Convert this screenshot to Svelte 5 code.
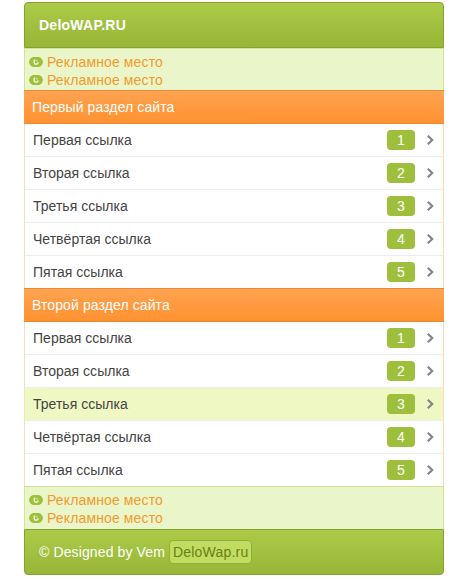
<script>
  const names = ['Первая ссылка', 'Вторая ссылка', 'Третья ссылка', 'Четвёртая ссылка', 'Пятая ссылка'];
  const sections = [
    { title: 'Первый раздел сайта', active: -1 },
    { title: 'Второй раздел сайта', active: 2 }
  ];
</script>

{#snippet ads(position)}
  <div class="ads {position}">
    {#each [1, 2] as n (n)}
      <a class="ad" href="#ad{n}">
        <svg width="14" height="10" viewBox="0 0 14 10">
          <path d="M4 0h6c2.200.6 3.600 2.600 4 5-.4 2.400-1.800 4.400-4 5H4C1.800 9.400.4 7.400 0 5 .4 2.600 1.800.6 4 0z" fill="#9dbf3c" />
          <path d="M6.200 2.600C4.300 3.900 4.800 7.100 7 7.200c1.200 0 2.200-.7 2.400-1.900" fill="none" stroke="#f1f9dc" stroke-width="1.400" />
          <path d="M7.200 3.200h1.600v1.400H7.200z" fill="#d9eaa8" />
        </svg>
        <span>Рекламное место</span>
      </a>
    {/each}
  </div>
{/snippet}

<div class="page">
  <header>DeloWAP.RU</header>
  {@render ads('top')}
  {#each sections as section (section.title)}
    <h2>{section.title}</h2>
    <nav>
      {#each names as name, i (name)}
        <a class="row" class:active={i === section.active} href="#link{i + 1}">
          <span class="name">{name}</span>
          <span class="count">{i + 1}</span>
          <svg width="7" height="10" viewBox="0 0 7 10">
            <path d="M.8.8L5.200 5 .8 9.200" fill="none" stroke="#858585" stroke-width="2.200" />
          </svg>
        </a>
      {/each}
    </nav>
  {/each}
  {@render ads('bottom')}
  <footer>© Designed by Vem <a href="#home">DeloWap.ru</a></footer>
</div>

<style>
  :global(body) {
    background: #fff;
  }
  .page {
    width: 420px;
    margin-left: 24px;
    padding-top: 2px;
    font: 14px/18px 'Liberation Sans', Arial, sans-serif;
    color: #444;
  }
  .page * {
    box-sizing: border-box;
  }
  a {
    color: inherit;
    text-decoration: none;
  }
  header,
  footer {
    display: flex;
    align-items: center;
    height: 46px;
    padding: 0 14px;
    border: 1px solid #84a22e;
    background: linear-gradient(#abcb48, #98b637);
    color: #fff;
  }
  header {
    border-radius: 4px 4px 0 0;
    font-weight: bold;
    letter-spacing: 0.25px;
  }
  footer {
    border-radius: 0 0 4px 4px;
    letter-spacing: 0.12px;
  }
  footer a {
    margin-left: 4px;
    padding: 2px 3px;
    border: 1px solid #92b035;
    border-radius: 4px;
    background: #c0dd62;
    color: #688015;
    letter-spacing: 0.2px;
  }
  .ads {
    padding: 4px 4px 1px;
    border: solid #d0e59a;
    border-width: 1px 1px 0;
    background: #eaf6c9;
    color: #f39a2d;
    letter-spacing: 0.13px;
  }
  .ads.bottom {
    padding-bottom: 2px;
  }
  .ad {
    display: flex;
    align-items: center;
    gap: 4px;
    height: 18px;
  }
  h2 {
    display: flex;
    align-items: center;
    height: 34px;
    margin: 0;
    padding: 0 8px;
    border: solid #e68a36;
    border-width: 1px 0;
    background: linear-gradient(#ffa351, #ff9230);
    color: #fff;
    font-size: 14px;
    font-weight: normal;
    letter-spacing: 0.1px;
  }
  nav {
    border: solid #ffdcb8;
    border-width: 0 1px;
  }
  .row {
    display: flex;
    align-items: center;
    height: 33px;
    padding: 0 9px 0 8px;
    border-bottom: 1px solid #ececec;
  }
  .row:last-child {
    height: 32px;
    border-bottom: 0;
  }
  .row.active {
    background: #eff8c3;
  }
  .name {
    flex: 1;
    letter-spacing: 0.02px;
  }
  .count {
    width: 28px;
    height: 20px;
    margin-right: 12px;
    border-radius: 4px;
    background: #9dbf3c;
    color: #fff;
    line-height: 20px;
    text-align: center;
  }
</style>
